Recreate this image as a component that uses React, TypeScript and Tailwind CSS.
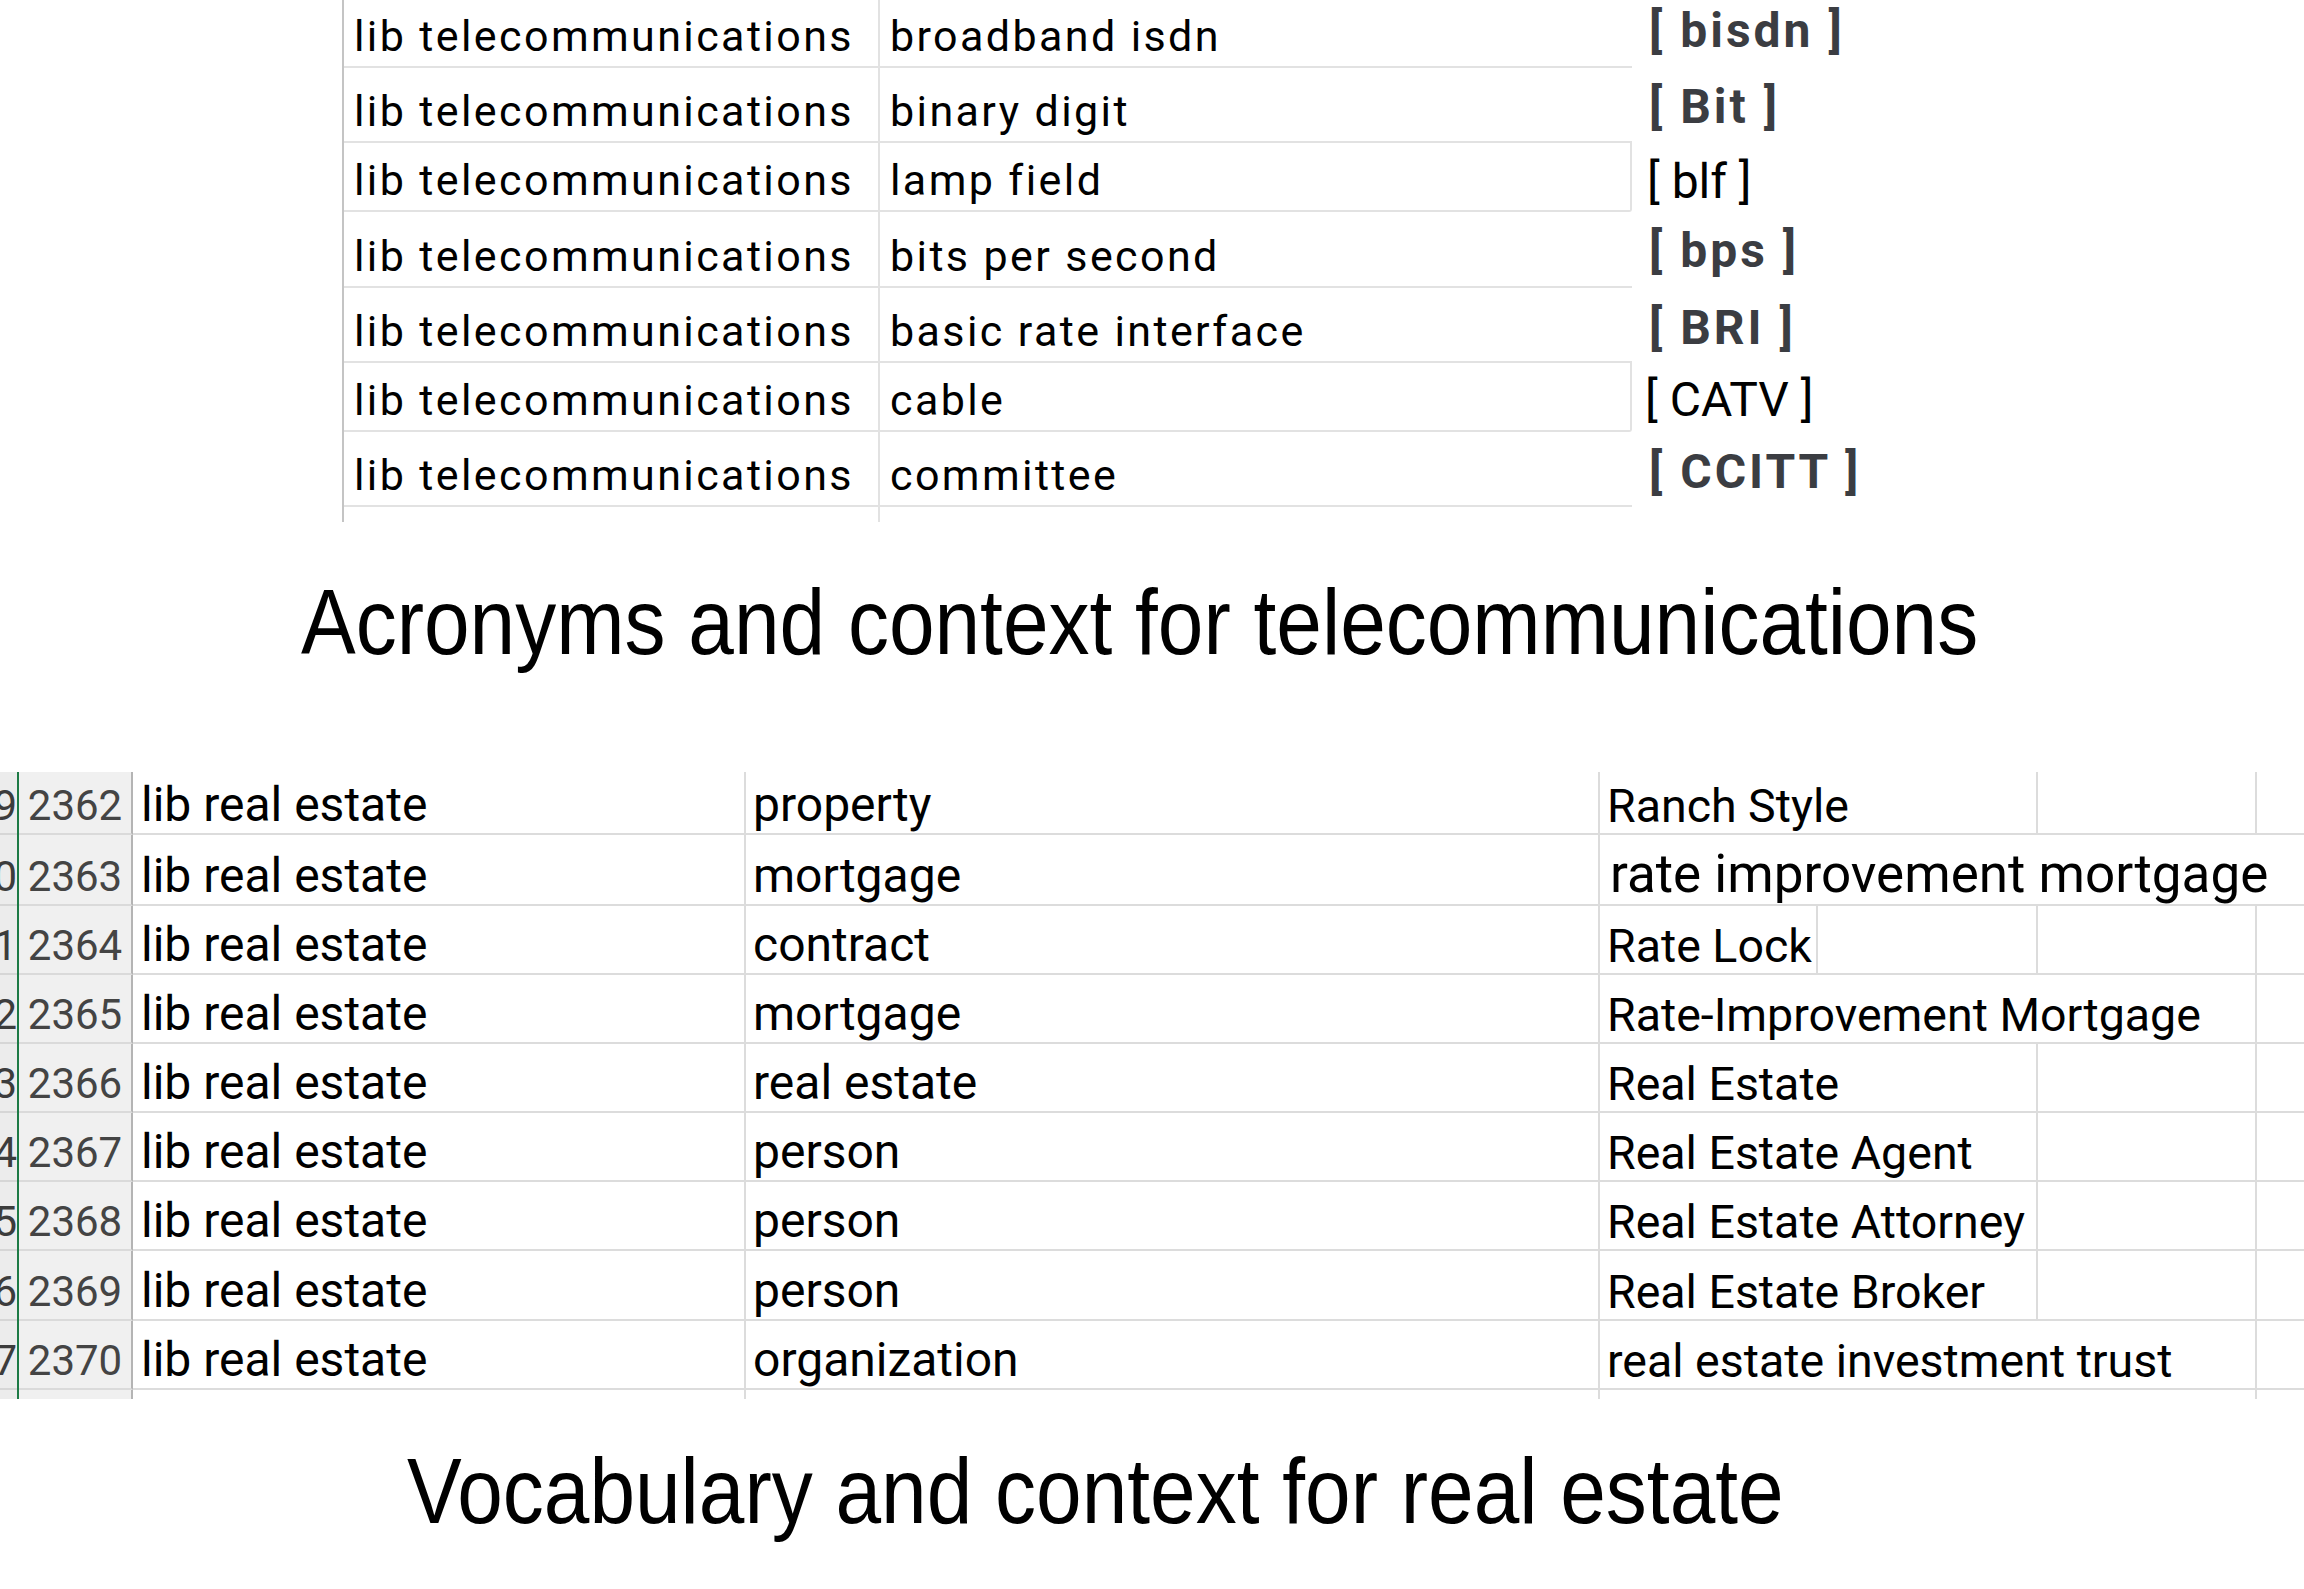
import React from "react"

type TelecomRow = {
  term: string
  acronym: string
  bold: boolean
  boxed: boolean
  rowClass: string
  acrClass: string
}

const telecomRows: TelecomRow[] = [
  { term: "broadband isdn", acronym: "bisdn", bold: true, boxed: false, rowClass: "h-[68px]", acrClass: "pb-[13px] pl-[17px]" },
  { term: "binary digit", acronym: "Bit", bold: true, boxed: false, rowClass: "h-[75px]", acrClass: "pb-[12px] pl-[17px]" },
  { term: "lamp field", acronym: "blf", bold: false, boxed: true, rowClass: "h-[69px]", acrClass: "pb-[6px] pl-[15px]" },
  { term: "bits per second", acronym: "bps", bold: true, boxed: false, rowClass: "h-[76px]", acrClass: "pb-[13px] pl-[17px]" },
  { term: "basic rate interface", acronym: "BRI", bold: true, boxed: false, rowClass: "h-[75px]", acrClass: "pb-[11px] pl-[17px]" },
  { term: "cable", acronym: "CATV", bold: false, boxed: true, rowClass: "h-[69px]", acrClass: "pb-[8px] pl-[13px]" },
  { term: "committee", acronym: "CCITT", bold: true, boxed: false, rowClass: "h-[75px]", acrClass: "pb-[11px] pl-[17px]" }
]

type EstateRow = {
  num: string
  prev: string
  context: string
  term: string
  big?: boolean
  e: boolean // gridline after col D
  f: boolean // gridline after col E
  g: boolean // gridline after col F
  rowClass: string
}

const estateRows: EstateRow[] = [
  { num: "2362", prev: "2359", context: "property", term: "Ranch Style", e: false, f: true, g: true, rowClass: "h-[63px]" },
  { num: "2363", prev: "2360", context: "mortgage", term: "rate improvement mortgage", big: true, e: false, f: false, g: false, rowClass: "h-[71px]" },
  { num: "2364", prev: "2361", context: "contract", term: "Rate Lock", e: true, f: true, g: true, rowClass: "h-[69px]" },
  { num: "2365", prev: "2362", context: "mortgage", term: "Rate-Improvement Mortgage", e: false, f: false, g: true, rowClass: "h-[69px]" },
  { num: "2366", prev: "2363", context: "real estate", term: "Real Estate", e: false, f: true, g: true, rowClass: "h-[69px]" },
  { num: "2367", prev: "2364", context: "person", term: "Real Estate Agent", e: false, f: true, g: true, rowClass: "h-[69px]" },
  { num: "2368", prev: "2365", context: "person", term: "Real Estate Attorney", e: false, f: true, g: true, rowClass: "h-[69px]" },
  { num: "2369", prev: "2366", context: "person", term: "Real Estate Broker", e: false, f: true, g: true, rowClass: "h-[70px]" },
  { num: "2370", prev: "2367", context: "organization", term: "real estate investment trust", e: false, f: false, g: true, rowClass: "h-[69px]" }
]

const TelecomTable = () => {
  return (
    <div className="ml-[342px] flex flex-col border-l-2 border-[#c4c4c4] font-['Roboto',sans-serif] text-black">
      {telecomRows.map((r) => (
        <div key={r.term} className={`flex ${r.rowClass}`}>
          <div className="flex w-[536px] shrink-0 items-end border-b-2 border-r-2 border-[#e2e2e2] pb-[8px] pl-[10px] text-[43px] leading-none tracking-[2.4px]">
            lib telecommunications
          </div>
          <div
            className={`flex w-[752px] shrink-0 items-end border-b-2 border-[#e2e2e2] pb-[8px] pl-[10px] text-[43px] leading-none tracking-[2.4px] ${
              r.boxed ? "rounded-br-[3px] border-r-2" : ""
            }`}
          >
            {r.term}
          </div>
          <div
            className={`flex flex-1 items-end whitespace-nowrap text-[48px] leading-none ${r.acrClass} ${
              r.bold ? "font-bold tracking-[3px] text-[#3b3d42]" : "text-black"
            }`}
          >
            [ {r.acronym} ]
          </div>
        </div>
      ))}
      <div className="flex h-[15px]">
        <div className="w-[536px] shrink-0 border-r-2 border-[#e2e2e2]" />
      </div>
    </div>
  )
}

const EstateTable = () => {
  return (
    <div className="flex flex-col font-['Roboto',sans-serif] text-black">
      {estateRows.map((r) => (
        <div key={r.num} className={`flex ${r.rowClass}`}>
          <div className="flex w-[17px] shrink-0 items-end justify-end overflow-hidden border-b-2 border-[#d6d6d6] bg-[#ececec] pb-[6px] text-[42px] leading-none text-[#3c3c3c]">
            {r.prev}
          </div>
          <div className="w-[2px] shrink-0 bg-[#1d7a45]" />
          <div className="flex w-[114px] shrink-0 items-end justify-center border-b-2 border-r-2 border-b-[#dadada] border-r-[#b4b4b4] bg-[#f0f0f0] pb-[6px] text-[42px] leading-none text-[#444444]">
            {r.num}
          </div>
          <div className="flex w-[613px] shrink-0 items-end border-b-2 border-r-2 border-[#dcdcdc] pb-[4px] pl-[8px] text-[48px] leading-none">
            lib real estate
          </div>
          <div className="flex w-[854px] shrink-0 items-end border-b-2 border-r-2 border-[#dcdcdc] pb-[4px] pl-[7px] text-[48px] leading-none">
            {r.context}
          </div>
          <div
            className={`flex w-[218px] shrink-0 items-end whitespace-nowrap border-b-2 border-[#dcdcdc] leading-none ${
              r.e ? "border-r-2" : ""
            } ${r.big ? "pb-[3px] pl-[10px] text-[53px]" : "pb-[4px] pl-[7px] text-[46.5px]"}`}
          >
            {r.term}
          </div>
          <div className={`w-[220px] shrink-0 border-b-2 border-[#dcdcdc] ${r.f ? "border-r-2" : ""}`} />
          <div className={`w-[219px] shrink-0 border-b-2 border-[#dcdcdc] ${r.g ? "border-r-2" : ""}`} />
          <div className="flex-1 border-b-2 border-[#dcdcdc]" />
        </div>
      ))}
      <div className="flex h-[9px]">
        <div className="w-[17px] shrink-0 bg-[#ececec]" />
        <div className="w-[2px] shrink-0 bg-[#1d7a45]" />
        <div className="w-[114px] shrink-0 border-r-2 border-[#b4b4b4] bg-[#f0f0f0]" />
        <div className="w-[613px] shrink-0 border-r-2 border-[#dcdcdc]" />
        <div className="w-[854px] shrink-0 border-r-2 border-[#dcdcdc]" />
        <div className="w-[218px] shrink-0" />
        <div className="w-[220px] shrink-0" />
        <div className="w-[219px] shrink-0 border-r-2 border-[#dcdcdc]" />
      </div>
    </div>
  )
}

const Caption = ({ text, className }: { text: string; className: string }) => (
  <div
    className={`h-[82px] whitespace-nowrap font-['Liberation_Sans',Arial,sans-serif] text-[82px] leading-none text-black ${className}`}
  >
    <span className="inline-block scale-y-[1.12]">{text}</span>
  </div>
)

export default function App() {
  return (
    <div className="flex h-[1589px] w-[2304px] flex-col overflow-hidden bg-white">
      <TelecomTable />
      <Caption text="Acronyms and context for telecommunications" className="mt-[60px] pl-[301px]" />
      <div className="mt-[108px]">
        <EstateTable />
      </div>
      <Caption text="Vocabulary and context for real estate" className="mt-[52px] pl-[407px]" />
    </div>
  )
}
